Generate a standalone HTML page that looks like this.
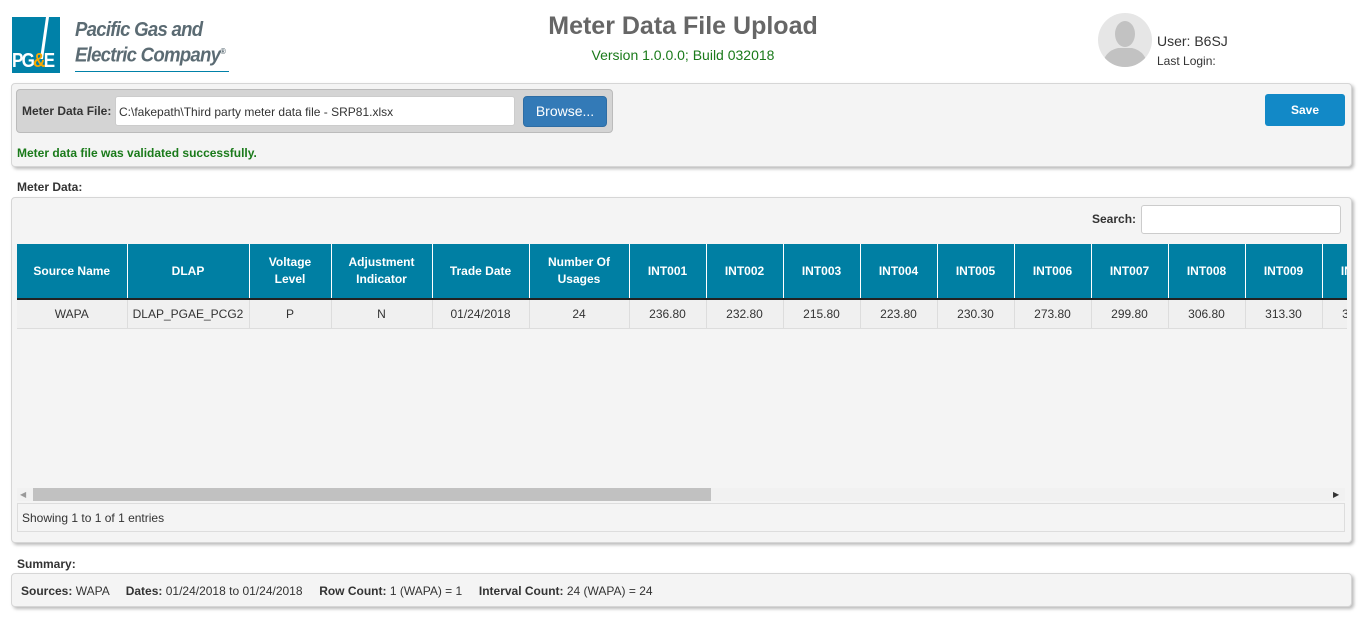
<!DOCTYPE html>
<html><head><meta charset="utf-8"><style>
*{box-sizing:border-box;margin:0;padding:0}
body{width:1366px;height:623px;overflow:hidden;background:#fff;font-family:"Liberation Sans",Arial,sans-serif;font-size:12px;color:#333;position:relative}
.a{position:absolute}
.panel{background:#f4f4f4;border:1px solid #d6d6d6;border-radius:4px;box-shadow:2px 2px 3px #bbb}
table{border-collapse:collapse;position:absolute;left:17px;top:244px;table-layout:fixed;width:1382px}
th{background:#007fa3;color:#fff;font-weight:bold;font-size:12px;height:55px;border-right:1px solid #fff;border-bottom:2px solid #222;line-height:17px;text-align:center}
td{height:29px;border-right:1px solid #ddd;border-bottom:1px solid #ddd;text-align:center;font-size:12px;color:#333;white-space:nowrap;overflow:hidden}
</style></head><body>
<div class="a" style="left:12px;top:17px;width:48px;height:56px;background:#0081a8"></div>
<svg class="a" style="left:12px;top:17px" width="48" height="56"><polygon points="34,0 37,0 31,42 28,42" fill="#fff"/></svg>
<div class="a" style="left:12px;top:50px;font:bold 20px 'Liberation Sans';color:#fff;letter-spacing:-2px;transform:scaleX(.85);transform-origin:left">PG<span style="color:#f9a800">&amp;</span>E</div>
<div class="a" style="left:75px;top:19px;font:italic bold 20px/22px 'Liberation Sans';color:#5b6b73;letter-spacing:-0.8px;transform:scaleX(.93);transform-origin:left">Pacific Gas and<br>Electric Company<sup style="font-size:8px">®</sup></div>
<div class="a" style="left:75px;top:71px;width:154px;height:1px;background:#0081a8"></div>
<div class="a" style="left:0;width:1366px;top:12px;text-align:center;font:bold 25px 'Liberation Sans';color:#666">Meter Data File Upload</div>
<div class="a" style="left:0;width:1366px;top:47px;text-align:center;font-size:14px;color:#1a7a1a">Version 1.0.0.0; Build 032018</div>
<svg class="a" style="left:1098px;top:13px" width="54" height="54"><defs><clipPath id="c"><circle cx="27" cy="27" r="27"/></clipPath></defs><circle cx="27" cy="27" r="27" fill="#e6e6e6"/><g clip-path="url(#c)" fill="#c2c2c2"><ellipse cx="27" cy="21" rx="10" ry="13"/><path d="M4 54 Q6 38 20 35 L34 35 Q48 38 50 54Z"/></g></svg>
<div class="a" style="left:1157px;top:33px;font-size:14px;color:#333">User: B6SJ</div>
<div class="a" style="left:1157px;top:54px;font-size:12px;color:#333">Last Login:</div>
<div class="a panel" style="left:11px;top:83px;width:1341px;height:84px"></div>
<div class="a" style="left:16px;top:89px;width:597px;height:44px;background:#d4d4d4;border:1px solid #bbb;border-radius:4px"></div>
<div class="a" style="left:22px;top:104px;font-weight:bold;font-size:12px">Meter Data File:</div>
<div class="a" style="left:115px;top:96px;width:400px;height:30px;background:#fff;border:1px solid #ccc;border-radius:3px;padding:8px 3px;font-size:12px">C:\fakepath\Third party meter data file - SRP81.xlsx</div>
<div class="a" style="left:523px;top:96px;width:84px;height:31px;background:#337ab7;border:1px solid #2e6da4;border-radius:4px;color:#fff;font-size:14px;text-align:center;line-height:28px">Browse...</div>
<div class="a" style="left:1265px;top:94px;width:80px;height:32px;background:#1289c7;border-radius:3px;color:#fff;font-weight:bold;text-align:center;line-height:32px">Save</div>
<div class="a" style="left:17px;top:146px;font-weight:bold;color:#1a7a1a">Meter data file was validated successfully.</div>
<div class="a" style="left:17px;top:180px;font-weight:bold">Meter Data:</div>
<div class="a panel" style="left:11px;top:197px;width:1341px;height:346px"></div>
<div class="a" style="left:1092px;top:212px;font-weight:bold">Search:</div>
<div class="a" style="left:1141px;top:205px;width:200px;height:29px;background:#fff;border:1px solid #ccc;border-radius:3px"></div>
<div class="a" style="left:17px;top:244px;width:1330px;height:90px;overflow:hidden">
<table style="left:0;top:0">
<colgroup><col style="width:110px"><col style="width:122px"><col style="width:82px"><col style="width:101px"><col style="width:97px"><col style="width:100px"><col style="width:77px"><col style="width:77px"><col style="width:77px"><col style="width:77px"><col style="width:77px"><col style="width:77px"><col style="width:77px"><col style="width:77px"><col style="width:77px"><col style="width:77px"></colgroup>
<tr><th>Source Name</th><th>DLAP</th><th>Voltage<br>Level</th><th>Adjustment<br>Indicator</th><th>Trade Date</th><th>Number Of<br>Usages</th><th>INT001</th><th>INT002</th><th>INT003</th><th>INT004</th><th>INT005</th><th>INT006</th><th>INT007</th><th>INT008</th><th>INT009</th><th>INT010</th></tr>
<tr style="background:#f0f0f0"><td>WAPA</td><td>DLAP_PGAE_PCG2</td><td>P</td><td>N</td><td>01/24/2018</td><td>24</td><td>236.80</td><td>232.80</td><td>215.80</td><td>223.80</td><td>230.30</td><td>273.80</td><td>299.80</td><td>306.80</td><td>313.30</td><td>320.00</td></tr>
</table></div>
<div class="a" style="left:17px;top:488px;width:1328px;height:13px;background:#f1f1f1"></div>
<div class="a" style="left:20px;top:490px;font-size:8px;color:#999">◀</div>
<div class="a" style="left:1333px;top:490px;font-size:8px;color:#333">▶</div>
<div class="a" style="left:33px;top:488px;width:678px;height:13px;background:#c1c1c1"></div>
<div class="a" style="left:17px;top:503px;width:1328px;height:29px;border:1px solid #ddd;padding:7px 4px;font-size:12px">Showing 1 to 1 of 1 entries</div>
<div class="a" style="left:17px;top:557px;font-weight:bold">Summary:</div>
<div class="a panel" style="left:11px;top:573px;width:1341px;height:34px;padding:10px 9px;font-size:12px"><b>Sources:</b> WAPA &nbsp;&nbsp;&nbsp; <b>Dates:</b> 01/24/2018 to 01/24/2018 &nbsp;&nbsp;&nbsp; <b>Row Count:</b> 1 (WAPA) = 1 &nbsp;&nbsp;&nbsp; <b>Interval Count:</b> 24 (WAPA) = 24</div>
</body></html>
